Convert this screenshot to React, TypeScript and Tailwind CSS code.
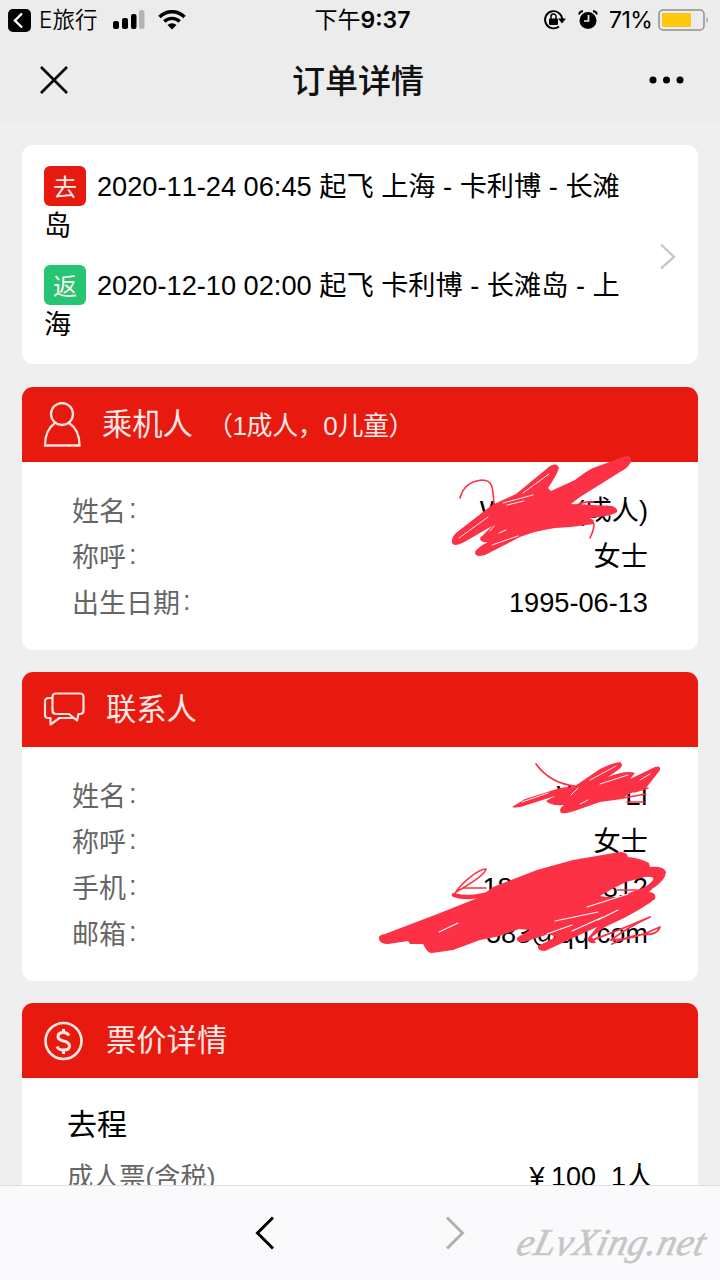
import type { ReactNode } from "react";

interface Row {
  label: string;
  value: ReactNode;
}

const FLIGHTS = [
  { tag: "去", tone: "bg-[#e8190f]", text: "2020-11-24 06:45 起飞 上海 - 卡利博 - 长滩岛" },
  { tag: "返", tone: "bg-[#25c573]", text: "2020-12-10 02:00 起飞 卡利博 - 长滩岛 - 上海" },
];

const PASSENGER: Row[] = [
  { label: "姓名", value: <>W<Gap className="w-[70px]" />(成人)</> },
  { label: "称呼", value: "女士" },
  { label: "出生日期", value: "1995-06-13" },
];

const CONTACT: Row[] = [
  { label: "姓名", value: <>W<Gap className="w-[43px]" />LI</> },
  { label: "称呼", value: "女士" },
  { label: "手机", value: <>18<Gap className="w-[90px]" />812</> },
  { label: "邮箱", value: <>4<Gap className="w-[66px]" />583@qq.com</> },
];

export default function App() {
  return (
    <div className="flex h-[1280px] w-[720px] flex-col overflow-hidden bg-[#efefef] font-['Liberation_Sans','Noto_Sans_CJK_SC',sans-serif] text-[27px] text-black [font-kerning:none]">
      <StatusBar />
      <NavBar />

      <main className="flex min-h-0 flex-1 flex-col overflow-hidden px-[22px] pt-[22px]">
        <section className="mb-[23px] flex h-[219px] shrink-0 items-center rounded-[11px] bg-white pl-[22px]">
          <div className="h-full w-[590px] pt-[22px]">
            {FLIGHTS.map((f) => (
              <div key={f.tag} className="mb-[21px] flex h-[78px]">
                <span className={`mt-[-1px] flex h-10 w-[42px] shrink-0 items-center justify-center rounded-md pt-[3px] text-[24px] leading-none text-[#fff0ee] ${f.tone}`}>
                  {f.tag}
                </span>
                <p className="mt-[1px] ml-[-42px] w-[590px] indent-[53px] text-[27.200px] leading-[38.500px]">{f.text}</p>
              </div>
            ))}
          </div>
          <svg className="ml-[25px] h-7 w-[18px]" viewBox="0 0 18 28" fill="none" stroke="#c8c8c8" strokeWidth="2.4">
            <path d="M2 3.500l13 12.500L2 27.500" />
          </svg>
        </section>

        <Card icon={<PersonIcon />} title="乘机人" note="（1成人，0儿童）" className="mb-[22px] h-[263px]">
          <Rows rows={PASSENGER} />
          <PassengerScribble />
        </Card>

        <Card icon={<ChatIcon />} title="联系人" className="mb-[22px] h-[309px]">
          <Rows rows={CONTACT} />
          <ContactScribble />
        </Card>

        <Card icon={<DollarIcon />} title="票价详情" className="h-[260px]">
          <div className="px-[45px] pt-[24px]">
            <h3 className="text-[30px] leading-[46px]">去程</h3>
            <div className="mt-[6px] flex justify-between leading-[46px]">
              <span className="text-[26.200px] text-[#666]">成人票(含税)</span>
              <span className="whitespace-pre">¥<span className="ml-[-1px]"> 100  1人</span></span>
            </div>
          </div>
        </Card>
      </main>

      <footer className="flex h-[95px] shrink-0 border-t border-[#dedee0] bg-[#fafafc]">
        <svg className="mt-[30px] ml-[254px] h-[34px] w-[22px]" viewBox="0 0 22 34" fill="none" stroke="#000" strokeWidth="3">
          <path d="M19 1.500L3.500 17L19 32.500" />
        </svg>
        <svg className="mt-[30px] ml-[168px] h-[34px] w-[22px]" viewBox="0 0 22 34" fill="none" stroke="#b0b0b0" strokeWidth="3">
          <path d="M3 1.500L18.500 17L3 32.500" />
        </svg>
        <span className="mt-[34px] ml-[50px] skew-x-[-14deg] font-['Liberation_Serif',serif] text-[38px] leading-[44px] tracking-[0.5px] text-[#c6c6c6] italic [-webkit-text-stroke:0.6px_#c6c6c6]">
          eLvXing.net
        </span>
      </footer>
    </div>
  );
}

function Gap({ className }: { className: string }) {
  return <span className={`inline-block ${className}`} />;
}

function StatusBar() {
  return (
    <div className="grid h-10 shrink-0 grid-cols-[190px_1fr_186px] items-center bg-[#ececec] text-[23px] leading-none">
      <div className="flex items-center pl-2">
        <svg className="h-[23px] w-[23px]" viewBox="0 0 23 23">
          <rect width="23" height="23" rx="5" />
          <path d="M14 4.500L7 11.500L14 18.500" fill="none" stroke="#fff" strokeWidth="2.400" />
        </svg>
        <span className="ml-2 w-[60px] whitespace-nowrap font-['Inter','Noto_Sans_CJK_SC',sans-serif] text-[22.500px] font-[350]">E旅行</span>
        <svg className="ml-[14px] h-5 w-8" viewBox="0 0 32 20">
          <rect x="0" y="11" width="6" height="8" rx="2" />
          <rect x="9" y="8" width="6" height="11" rx="2" />
          <rect x="18" y="4" width="5.500" height="15" rx="2" />
          <rect x="26" y="0" width="5.500" height="19" rx="2" fill="#b4b4b4" />
        </svg>
        <svg className="ml-[13px] h-5 w-7" viewBox="0 0 28 20" fill="none" stroke="#000" strokeWidth="3.400">
          <path d="M1.500 7a17.500 17.500 0 0 1 25 0" />
          <path d="M6.300 11.500a11 11 0 0 1 15.400 0" />
          <path d="M14 19.500l-4.500-4.500a6.500 6.500 0 0 1 9 0z" fill="#000" stroke="none" />
        </svg>
      </div>
      <div className="pl-[1px] text-center font-['Inter','Noto_Sans_CJK_SC',sans-serif] text-[23px]">
        下午<span className="font-semibold">9:37</span>
      </div>
      <div className="flex items-center pl-[9px]">
        <svg className="h-[22px] w-[24px]" viewBox="0 0 24 22" fill="none" stroke="#000" strokeWidth="1.900">
          <path d="M19.200 10A8.600 8.600 0 1 0 16 17.500" />
          <path d="M15 9.500h8l-4 5z" fill="#000" stroke="none" />
          <rect x="6" y="9.500" width="9" height="6.500" rx="1" fill="#000" stroke="none" />
          <path d="M8 10V7.500a2.500 2.500 0 0 1 5 0V10" strokeWidth="1.500" />
        </svg>
        <svg className="ml-[11px] h-[20px] w-[20px]" viewBox="0 0 20 20">
          <circle cx="10" cy="10.500" r="8.500" />
          <path d="M10.500 5v6H6" fill="none" stroke="#ececec" strokeWidth="1.700" />
          <path d="M1 4.500Q1.500 1.500 5 1M19 4.500Q18.500 1.500 15 1" fill="none" stroke="#000" strokeWidth="1.800" />
        </svg>
        <span className="ml-[11px] w-[45px] font-['Inter',sans-serif] text-[23px] tracking-[-0.600px]">71%</span>
        <svg className="ml-[4px] h-[22px] w-[52px]" viewBox="0 0 52 22">
          <rect x="1" y="1" width="45" height="20" rx="4" fill="none" stroke="#8e8e8e" strokeWidth="1.500" />
          <rect x="4" y="4" width="29" height="14" rx="1" fill="#fdc70f" />
          <path d="M48.500 7.500q2.500 3.500 0 7z" fill="#8e8e8e" />
        </svg>
      </div>
    </div>
  );
}

function NavBar() {
  return (
    <header className="grid h-[83px] shrink-0 grid-cols-[1fr_auto_1fr] items-center bg-[#ececec] px-10 pb-[3px]">
      <svg className="h-7 w-7" viewBox="0 0 28 28" stroke="#000" strokeWidth="2.600">
        <path d="M1 1l26 26M27 1L1 27" />
      </svg>
      <h1 className="mt-[3px] ml-[-4px] text-[33px] leading-none font-medium text-[#111]">订单详情</h1>
      <svg className="mr-[-4px] h-2 w-[35px] justify-self-end" viewBox="0 0 35 8">
        <circle cx="4" cy="4" r="3.500" />
        <circle cx="17.500" cy="4" r="3.500" />
        <circle cx="31" cy="4" r="3.500" />
      </svg>
    </header>
  );
}

interface CardProps {
  icon: ReactNode;
  title: string;
  note?: string;
  className: string;
  children: ReactNode;
}

function Card({ icon, title, note, className, children }: CardProps) {
  return (
    <section className={`relative shrink-0 rounded-[11px] bg-white ${className}`}>
      <div className="flex h-[75px] items-center rounded-t-[11px] bg-[#e8190f] pl-[21px] text-[#ffe9e6]">
        {icon}
        <h2 className="mt-[2px] ml-[21px] text-[30.300px] leading-none">{title}</h2>
        {note && <span className="mt-[3px] ml-[14px] text-[26px] leading-none tracking-[-0.400px]">{note}</span>}
      </div>
      {children}
    </section>
  );
}

function Rows({ rows }: { rows: Row[] }) {
  return (
    <dl className="pt-[26px] pr-[50px] pl-[50px]">
      {rows.map((r) => (
        <div key={r.label} className="flex h-[46px] items-center justify-between leading-[46px]">
          <dt className="flex pt-[1px] text-[#666]">
            {r.label}
            <span className="mt-[-3px] ml-[3px]">:</span>
          </dt>
          <dd className="text-[27.200px] whitespace-nowrap">{r.value}</dd>
        </div>
      ))}
    </dl>
  );
}

function PersonIcon() {
  return (
    <svg className="h-[46px] w-[38px]" viewBox="0 0 38 46" fill="none" stroke="#ffe3e0" strokeWidth="2.300">
      <circle cx="19" cy="12" r="11" />
      <path d="M12 21C5.500 25.500 2 33 2 43.500h34.500C36.500 33 33 25.500 26 21" />
    </svg>
  );
}

function ChatIcon() {
  return (
    <svg className="mt-[-2px] h-[34px] w-[42px]" viewBox="0 0 42 34" fill="none" stroke="#ffe3e0" strokeWidth="2.200" strokeLinejoin="round">
      <path d="M13 1.500h24q3.500 0 3.500 3.500v13.500q0 3.500-3.500 3.500h-1.500l-1.500 6.500l-8-6.500H13q-3.500 0-3.500-3.500V5q0-3.500 3.500-3.500z" />
      <path d="M9.500 6H6Q2 6 2 9.500v13.500q0 3 3 3h2.500v6.500l9-6.500h14" />
    </svg>
  );
}

function DollarIcon() {
  return (
    <svg className="h-10 w-[42px]" viewBox="0 0 42 40" fill="none" stroke="#ffe9e6" strokeWidth="2.600">
      <circle cx="20.500" cy="20" r="18" />
      <path d="M26 14.500Q24.500 11.500 20.500 11.500Q15 11.500 15 15.500Q15 18.800 20.500 20Q26.500 21.300 26.500 25Q26.500 29 20.500 29Q15.500 29 14 25.500M20.500 8v4M20.500 29v4" strokeWidth="3" />
    </svg>
  );
}

function PassengerScribble() {
  return (
    <svg className="absolute top-[58px] left-[418px] h-[120px] w-[200px]" viewBox="440 443 200 120" fill="none" stroke="#fd3146" strokeLinecap="round" strokeLinejoin="round">
      <path d="M460 496C463 484 472 479 482 478C493 478 493 486 494 504" strokeWidth="1.600" />
      <path
        d="M452 541Q451 536 456 531L492 503L516 492L550 464Q557 460 559 466Q557 473 548 486L551 489L575 478Q588 468 593 466L626 454Q632 454 631 460Q628 466 620 470L580 495L571 502L612 504Q618 506 617 510Q612 514 590 516Q595 518 594 522Q575 525 555 526Q535 529 520 535L485 553Q475 556 475 550Q478 545 488 540Q480 541 480 536L492 524L466 539Q454 546 452 541z"
        fill="#fd3146"
        stroke="none"
      />
      <path d="M594 522Q594 528 590 536M575 504Q583 499 594 500M594 510L584 503" strokeWidth="1.600" />
      <path d="M523 491L549 472M459 536L488 515M503 501L533 493M507 503L524 499M490 529L494 524M492 543L518 534M499 531L506 528" stroke="#fff" strokeWidth="0.900" />
    </svg>
  );
}

function ContactScribble() {
  return (
    <svg className="absolute top-[83px] left-[348px] h-[210px] w-[310px]" viewBox="370 755 310 210" fill="none" stroke="#fd3146" strokeLinecap="round" strokeLinejoin="round">
      {/* name */}
      <path d="M536 764C544 775 556 784 575 786" strokeWidth="1.700" />
      <path
        d="M512 807L525 799L560 788L575 786L600 769Q612 763 620 762Q625 765 618 770L608 777Q626 770 635 773L630 779L655 767Q661 765 660 770L650 783L646 788Q630 792 622 799L600 802L580 809Q568 814 561 813Q558 809 564 805Q550 806 546 801L555 796L530 804Q516 809 512 807z"
        fill="#fd3146"
        stroke="none"
      />
      <path d="M623 798L646 794M627 802L644 802M634 792L648 788" strokeWidth="1.500" />
      <path d="M590 780L616 766M600 784L628 775M522 802L548 793M571 795L578 788M580 804L588 800M640 780L650 774" stroke="#fff" strokeWidth="0.900" />

      {/* phone and mail */}
      <path
        fillRule="evenodd"
        d="M379 939Q378 935 385 934L440 913L480 897L493 887L537 870L573 860L620 852Q627 852 628 857Q640 858 649 863L650 867Q664 866 666 872Q666 880 652 889L649 892Q657 893 655 899Q645 907 624 918L605 927L592 937L596 943Q587 944 588 938L597 927L575 937L545 951Q537 951 538 946L556 937L549 934L524 942Q514 942 518 937L530 930L519 929L500 936L480 940L453 950L432 953Q428 954 423 944L410 944L408 941L388 944Q380 944 379 939z
          M600 896L612 889L626 882L645 877Q655 876 653 880Q650 885 640 889L618 897L606 897z"
        fill="#fd3146"
        stroke="none"
      />
      <path d="M617 890L637 890" strokeWidth="1.600" />
      <path d="M454 895C460 884 478 869 486 869C486 874 467 886 456 892" strokeWidth="1.600" />
      <path d="M454 895C468 900 484 896 500 890" strokeWidth="4.500" />
      <path d="M463 888L486 888" strokeWidth="1.500" />
      <path d="M590 941Q620 930 650 917Q628 927 611 940Q634 940 660 927Q658 933 651 934Q632 934 612 944" strokeWidth="1.900" />
      <path d="M555 921L598 912M587 907L628 894M547 934L572 925M572 931L603 917M598 920L618 910M439 932L458 923" stroke="#fff" strokeWidth="1.100" />
    </svg>
  );
}
